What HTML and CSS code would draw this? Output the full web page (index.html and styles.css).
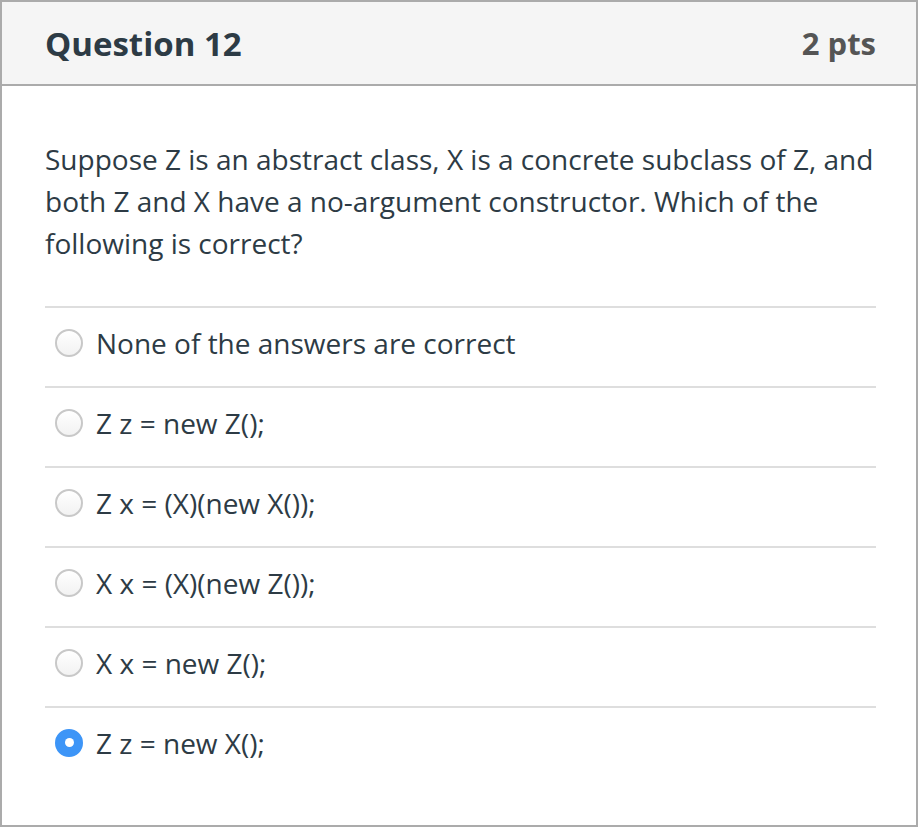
FILE: index.html
```html
<!DOCTYPE html>
<html>
<head>
<meta charset="utf-8">
<link rel="stylesheet" href="styles.css">
</head>
<body>
<div class="card">
  <div class="header">
    <h2 class="title">Question 12</h2>
    <div class="pts">2 pts</div>
  </div>
  <div class="content">
    <p class="question">Suppose Z is an abstract class, X is a concrete subclass of Z, and both Z and X have a no-argument constructor. Which of the following is correct?</p>
    <div class="answers">
      <label class="answer"><span class="radio"></span><span class="atext">None of the answers are correct</span></label>
      <label class="answer"><span class="radio"></span><span class="atext">Z z = new Z();</span></label>
      <label class="answer"><span class="radio"></span><span class="atext">Z x = (X)(new X());</span></label>
      <label class="answer"><span class="radio"></span><span class="atext">X x = (X)(new Z());</span></label>
      <label class="answer"><span class="radio"></span><span class="atext">X x = new Z();</span></label>
      <label class="answer"><span class="radio checked"></span><span class="atext">Z z = new X();</span></label>
    </div>
  </div>
</div>
</body>
</html>
```
FILE: styles.css
```css
html, body {
  margin: 0;
  padding: 0;
  background: #fff;
}
body {
  font-family: "Open Sans", "DejaVu Sans", sans-serif;
  color: #2d3b45;
}
.card {
  box-sizing: border-box;
  width: 918px;
  height: 827px;
  border: 2px solid #ababab;
  display: flex;
  flex-direction: column;
}
.header {
  height: 82px;
  background: #f5f5f5;
  border-bottom: 2px solid #ababab;
  display: flex;
  align-items: center;
  justify-content: space-between;
  padding: 0 40px 0 43px;
}
.title {
  margin: 0;
  font-size: 33px;
  font-weight: 700;
  color: #2d3b45;
}
.pts {
  font-size: 31px;
  font-weight: 700;
  color: #555;
}
.content {
  padding: 52px 40px 0 43px;
}
.question {
  margin: 0 0 42px 0;
  font-size: 28px;
  line-height: 42px;
}
.answers {
  display: flex;
  flex-direction: column;
}
.answer {
  border-top: 2px solid #dedede;
  display: flex;
  align-items: center;
  padding: 0 0 9px 10px;
  height: 69px;
}
.radio {
  box-sizing: border-box;
  width: 28px;
  height: 28px;
  border-radius: 50%;
  border: 2px solid #c8c8c8;
  background: linear-gradient(#fff, #f2f2f2);
  margin-right: 13px;
  flex: none;
  display: flex;
  align-items: center;
  justify-content: center;
}
.radio.checked {
  border-color: #3d95f7;
  background: #3d95f7;
}
.radio.checked::after {
  content: "";
  width: 9px;
  height: 9px;
  border-radius: 50%;
  background: #fff;
}
.atext {
  font-size: 28px;
}
```
